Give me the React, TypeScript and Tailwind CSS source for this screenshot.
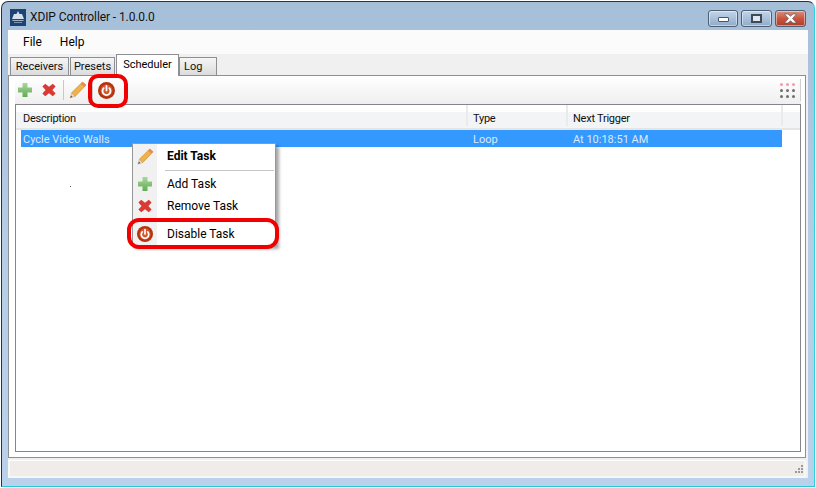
import { ReactNode } from 'react';

const font = { fontFamily: 'Roboto, "Noto Sans", sans-serif' };

const PlusIcon = ({ size = 14 }: { size?: number }) => (
  <svg width={size} height={size} viewBox="0 0 14 14">
    <defs>
      <linearGradient id="plusFill" x1="0" y1="0" x2="0" y2="1">
        <stop offset="0" stopColor="#a8d89c" />
        <stop offset="1" stopColor="#62ab53" />
      </linearGradient>
    </defs>
    <path d="M4.500 0h5v4.500H14v5H9.500V14h-5V9.500H0v-5h4.500z" fill="url(#plusFill)" />
  </svg>
);

const CrossIcon = ({ size = 14 }: { size?: number }) => (
  <svg width={size} height={size} viewBox="0 0 14 14">
    <path d="M3.200 0.800L7 3.800l3.800-3L13.600 3.600 10.400 7l3.200 3.500-2.800 2.800L7 10.200l-3.800 3.100-2.800-2.800L3.600 7 0.400 3.600z" fill="#d93a36" />
  </svg>
);

const PencilIcon = ({ size = 18 }: { size?: number }) => (
  <svg width={size} height={size} viewBox="0 0 18 18">
    <path d="M13.500 1l3.500 3L6 15.500 2.500 12z" fill="#f0b24a" stroke="#c98a2c" strokeWidth="0.7" />
    <path d="M13.500 1l3.500 3-1.800 1.900-3.500-3z" fill="#e58a5a" />
    <path d="M2.500 12L6 15.500 1 17z" fill="#f3dfc0" stroke="#b9a184" strokeWidth="0.5" />
    <path d="M1 17l1.200-2.600 1.400 1.400z" fill="#555" />
  </svg>
);

const PowerIcon = ({ size = 17 }: { size?: number }) => (
  <svg width={size} height={size} viewBox="0 0 17 17">
    <circle cx="8.500" cy="8.500" r="8.500" fill="#b5330f" />
    <circle cx="8.500" cy="8.500" r="6" fill="#d4582e" />
    <path d="M5.700 6.200a4 4 0 1 0 5.600 0" fill="none" stroke="#fff" strokeWidth="1.800" strokeLinecap="round" />
    <path d="M8.500 3.800v4.600" stroke="#fff" strokeWidth="1.800" strokeLinecap="round" />
  </svg>
);

const AppLogo = () => (
  <svg width="16" height="17" viewBox="0 0 16 17">
    <rect width="16" height="17" fill="#1e4373" />
    <path d="M8 2l1.500 3H12l2 5H2l2-5h2.500z" fill="#d6e0ec" />
    <rect x="2.500" y="11" width="11" height="1" fill="#9fb3cc" />
    <rect x="4" y="13" width="8" height="1" fill="#7f97b5" />
  </svg>
);

const Tab = ({ label, className }: { label: string; className: string }) => (
  <div className={`flex border border-b-0 border-[#8e8f94] ${className}`}>{label}</div>
);

const WindowButton = ({ className, children }: { className: string; children: ReactNode }) => (
  <div className={`flex h-[17px] items-center justify-center rounded-[3px] border border-[#4e5f73] shadow-[inset_0_0_0_1px_rgba(255,255,255,0.45)] ${className}`}>
    {children}
  </div>
);

const GripDots = () => {
  const rows = ['bg-[#f59aa5]', 'bg-[#6f6f6f]', 'bg-[#6f6f6f]'];
  return (
    <div className="grid grid-cols-3 gap-x-[3px] gap-y-[3px]">
      {rows.map((color, r) =>
        [0, 1, 2].map((c) => <span key={`${r}-${c}`} className={`h-[3px] w-[3px] rounded-full ${color}`} />),
      )}
    </div>
  );
};

const MenuItem = ({ icon, label, className = '' }: { icon: ReactNode; label: string; className?: string }) => (
  <div className={`flex h-[22px] items-center ${className}`}>
    <div className="flex w-[24px] justify-center">{icon}</div>
    <span className="ml-[10px]">{label}</span>
  </div>
);

export default function App() {
  return (
    <div className="h-[488px] w-[816px] overflow-hidden bg-white pl-px pt-px">
      <div
        style={font}
        className="relative flex h-[486px] w-[814px] flex-col rounded-t-[7px] border-x border-t border-x-[#2b3138] border-t-[#2b3138] border-r-[#27d3dd] border-b border-b-[#27c8d6] bg-gradient-to-b from-[#a6bfd9] via-[#b6cde6] to-[#b9d1ea] px-[6px] text-[12px] leading-none text-black"
      >
        <div className="flex h-[28px] shrink-0 items-center">
          <div className="ml-[2px] mt-[2px]">
            <AppLogo />
          </div>
          <span className="ml-[4px] mt-[2px] text-[12px] tracking-[-0.1px] text-[#111]">XDIP Controller - 1.0.0.0</span>
          <div className="ml-auto mt-[4px] flex items-center gap-[3px] pr-[2px]">
            <WindowButton className="w-[30px] bg-gradient-to-b from-[#c3d5e8] via-[#a9c0da] to-[#8fabc9]">
              <span className="mt-[2px] h-[5px] w-[11px] rounded-[1px] border border-[#4a5563] bg-white" />
            </WindowButton>
            <WindowButton className="w-[31px] bg-gradient-to-b from-[#c3d5e8] via-[#a9c0da] to-[#8fabc9]">
              <span className="h-[9px] w-[11px] border-2 border-[#3f4a58] bg-[#dfe8f2]" />
            </WindowButton>
            <WindowButton className="w-[31px] bg-gradient-to-b from-[#dd8e80] via-[#c8563f] to-[#b23a2a]">
              <svg width="15" height="11" viewBox="0 0 15 11">
                <path d="M1.500 1h3.500L7.500 3.200 10 1h3.500L9.500 5.500l4 4.500H10L7.500 7.800 5 10H1.500l4-4.500z" fill="#fff" stroke="#5b4a48" strokeWidth="0.6" />
              </svg>
            </WindowButton>
          </div>
        </div>

        <div className="flex min-h-0 flex-1 flex-col bg-[#f0f0f0]">
          <div className="flex h-[24px] shrink-0 items-center gap-[18px] bg-[#fbfbfb] pl-[15px] text-[12px]">
            <span>File</span>
            <span>Help</span>
          </div>

          <div className="relative z-10 flex h-[21px] shrink-0 items-end pl-[2px] text-[11px]">
            <Tab label="Receivers" className="mr-px h-[18px] w-[59px] items-center justify-center bg-gradient-to-b from-[#f5f5f5] to-[#dcdcdc] text-[#111]" />
            <Tab label="Presets" className="mr-px h-[18px] w-[45px] items-center justify-center bg-gradient-to-b from-[#f5f5f5] to-[#dcdcdc] text-[#111]" />
            <Tab label="Scheduler" className="-mb-px h-[22px] w-[63px] items-center justify-center bg-white pb-[3px]" />
            <Tab label="Log" className="h-[18px] w-[38px] items-center bg-gradient-to-b from-[#f5f5f5] to-[#dcdcdc] pl-[4px] text-[#111]" />
          </div>

          <div className="mr-[2px] flex h-[383px] shrink-0 flex-col border border-[#8e8f94] bg-white pb-[5px] pl-[6px] pr-[4px]">
            <div className="flex h-[28px] shrink-0 items-center rounded-tl-[3px] bg-gradient-to-b from-white to-[#efefef] pl-[3px]">
              <PlusIcon />
              <div className="ml-[10px]">
                <CrossIcon />
              </div>
              <span className="ml-[7px] h-[20px] w-px bg-[#c8c8c8]" />
              <div className="ml-[5px]">
                <PencilIcon />
              </div>
              <span className="ml-[5px] h-[20px] w-px bg-[#c8c8c8]" />
              <div className="ml-[5px]">
                <PowerIcon />
              </div>
              <div className="ml-auto mr-[5px] mt-[1px]">
                <GripDots />
              </div>
              <span className="h-[22px] w-px bg-[#cfcfcf]" />
            </div>

            <div className="relative min-h-0 flex-1 border border-[#85868c] bg-white text-[11px]">
              <div className="flex h-[25px] items-end border-b-2 border-[#e3e5e7] bg-gradient-to-b from-white from-30% to-[#f2f4f5] to-30% pb-[2px] tracking-[-0.25px] text-[#111]">
                <div className="h-full w-[452px] border-r-2 border-[#e8eaec] pl-[7px] pt-[8px]">Description</div>
                <div className="h-full w-[100px] border-r-2 border-[#e8eaec] pl-[5px] pt-[8px]">Type</div>
                <div className="h-full w-[215px] border-r-2 border-[#e8eaec] pl-[5px] pt-[8px]">Next Trigger</div>
              </div>
              <div className="ml-[5px] flex h-[17px] w-[761px] items-center bg-[#3399ff] pt-[1px] text-[#dbeafb]">
                <div className="w-[452px] pl-[2px]">Cycle Video Walls</div>
                <div className="w-[100px]">Loop</div>
                <div>At 10:18:51 AM</div>
              </div>
              <span className="absolute left-[54px] top-[81px] h-px w-px bg-[#555]" />
            </div>
          </div>

          <div className="mr-[2px] mt-[2px] flex-1 border-x-2 border-b-2 border-t border-[#f7f7f7] border-t-white bg-[#efecea]" />
        </div>
        <div className="h-[8px] shrink-0" />

        <div className="absolute right-[11px] top-[463px] grid grid-cols-3 gap-[1px]">
          {[0, 0, 1, 0, 1, 1, 1, 1, 1].map((on, i) => (
            <span key={i} className={`h-[2px] w-[2px] ${on ? 'bg-[#9a9a9a]' : 'bg-transparent'}`} />
          ))}
        </div>

        <div className="absolute left-[130px] top-[141px] z-20 h-[103px] w-[144px] border border-[#979797] bg-white shadow-[3px_3px_3px_rgba(0,0,0,0.35)]">
          <div className="absolute inset-y-0 left-0 w-[24px] bg-[#f1f1f1]" />
          <div className="relative pt-[1px]">
            <MenuItem icon={<PencilIcon size={17} />} label="Edit Task" className="font-bold" />
            <div className="ml-[32px] mr-px mt-[3px] h-px bg-[#c5c5c5]" />
            <div className="mt-[2px]">
              <MenuItem icon={<PlusIcon />} label="Add Task" />
              <MenuItem icon={<CrossIcon />} label="Remove Task" />
            </div>
            <MenuItem icon={<PowerIcon size={16} />} label="Disable Task" className="mt-[6px]" />
          </div>
        </div>

        <div className="absolute left-[86px] top-[72px] z-30 h-[34px] w-[40px] rounded-[10px] border-4 border-[#f00000]" />
        <div className="absolute left-[125px] top-[216px] z-30 h-[31px] w-[152px] rounded-[12px] border-4 border-[#f00000]" />
      </div>
    </div>
  );
}
